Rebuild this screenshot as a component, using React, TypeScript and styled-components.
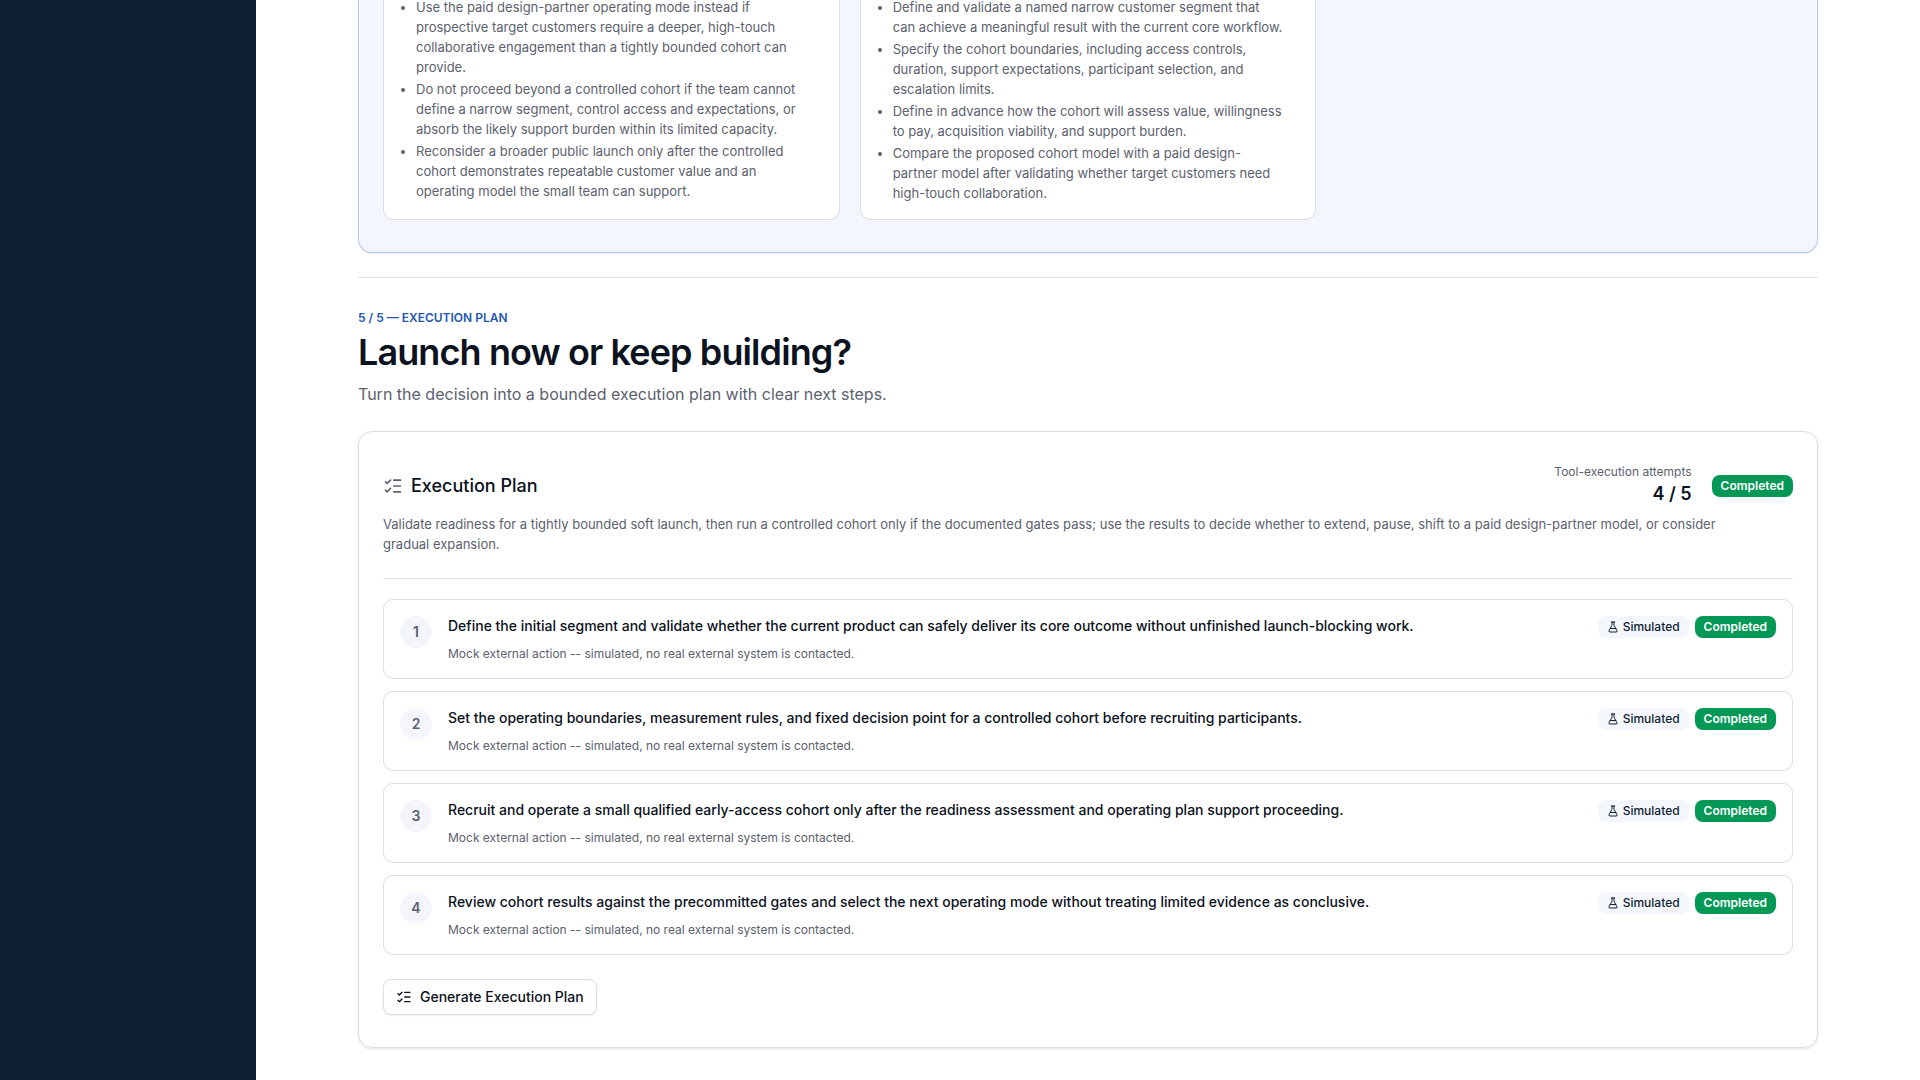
import React from "react";
import styled, { createGlobalStyle } from "styled-components";
import { FlaskConical, ListChecks } from "lucide-react";

const GlobalStyle = createGlobalStyle`
  *, *::before, *::after { box-sizing: border-box; }
  body {
    margin: 0;
    background: #ffffff;
    color: #0b1220;
    font-family: Inter, "Liberation Sans", sans-serif;
    font-size: 14px;
    line-height: 20px;
  }
  h1, h2, h3, p, ul, ol { margin: 0; padding: 0; }
`;

const Shell = styled.div`
  display: flex;
  min-height: 100vh;
  overflow: hidden;
`;

const Sidebar = styled.aside`
  flex: none;
  width: 256px;
  background: #111f33;
`;

const Main = styled.main`
  flex: 1;
  min-width: 0;
  margin-top: -3px;
  padding: 0 24px 32px;
`;

const Content = styled.div`
  max-width: 1460px;
  margin: 0 auto;
`;

const Decision = styled.section`
  display: grid;
  grid-template-columns: repeat(3, 1fr);
  gap: 20px;
  padding: 0 24px 32px;
  background: #f3f7fd;
  border: 1px solid #b9c9e6;
  border-top: 0;
  border-radius: 0 0 14px 14px;
  box-shadow: 0 1px 2px rgba(15, 30, 51, 0.1);
`;

const Note = styled.article`
  padding: 0 16px 16px;
  background: #ffffff;
  border: 1px solid #dcdfe5;
  border-top: 0;
  border-radius: 0 0 10px 10px;
`;

const Bullets = styled.ul`
  display: grid;
  gap: 2px;
  padding-left: 16px;
  color: #5b616e;
  font-size: 13px;
  white-space: pre-line;
`;

const Step = styled.section`
  margin-top: 24px;
  padding-top: 32px;
  border-top: 1px solid #dfe1e5;
`;

const Eyebrow = styled.p`
  color: #2557b0;
  font-size: 12px;
  font-weight: 600;
  line-height: 16px;
  text-transform: uppercase;
`;

const Heading = styled.h1`
  margin-top: 6px;
  font-size: 36px;
  font-weight: 600;
  line-height: 40px;
  letter-spacing: -0.025em;
`;

const Lead = styled.p`
  margin: 10px 0 24px;
  color: #5b616e;
  font-size: 16px;
  line-height: 25px;
`;

const Card = styled.div`
  padding: 32px 24px;
  border: 1px solid #dcdee2;
  border-radius: 14px;
  box-shadow: 0 1px 3px rgba(0, 0, 0, 0.12);
`;

const CardHeader = styled.header`
  display: flex;
  align-items: center;
  justify-content: space-between;
  gap: 20px;
`;

const CardTitle = styled.h2`
  display: flex;
  align-items: center;
  gap: 8px;
  font-size: 18px;
  font-weight: 500;
  line-height: 28px;

  svg { color: #5b616e; }
`;

const Status = styled.div`
  display: flex;
  align-items: center;
  gap: 20px;
`;

const Attempts = styled.div`
  text-align: right;
`;

const Small = styled.p`
  color: #5b616e;
  font-size: 12px;
  line-height: 16px;
`;

const Count = styled.p`
  font-size: 18px;
  font-weight: 600;
  line-height: 28px;
`;

const Summary = styled.p`
  margin-top: 6px;
  padding-bottom: 24px;
  color: #5b616e;
  font-size: 13px;
  border-bottom: 1px solid #dfe1e5;
`;

const Tasks = styled.ol`
  display: grid;
  gap: 12px;
  margin: 20px 0 24px;
  list-style: none;
`;

const Task = styled.li`
  display: flex;
  align-items: flex-start;
  gap: 16px;
  padding: 16px;
  border: 1px solid #dcdee2;
  border-radius: 10px;
`;

const Index = styled.span`
  display: grid;
  place-items: center;
  flex: none;
  width: 32px;
  height: 32px;
  border-radius: 50%;
  background: #f3f5fa;
  color: #5b616e;
  font-weight: 600;
`;

const TaskBody = styled.div`
  display: grid;
  flex: 1;
  gap: 10px;
`;

const TaskTitle = styled.h3`
  font-size: 14px;
  font-weight: 500;
  line-height: 20px;
`;

const Badges = styled.div`
  display: flex;
  gap: 6px;
`;

const Badge = styled.span<{ $tone: "done" | "muted" }>`
  display: inline-flex;
  align-items: center;
  gap: 4px;
  padding: 3px 9px;
  border-radius: 8px;
  background: ${({ $tone }) => ($tone === "done" ? "#039855" : "#f3f6fb")};
  color: ${({ $tone }) => ($tone === "done" ? "#ffffff" : "#111f33")};
  font-size: 12px;
  font-weight: ${({ $tone }) => ($tone === "done" ? 600 : 500)};
  line-height: 16px;
`;

const BeakerIcon = styled(FlaskConical)`
  flex: none;
`;

const Button = styled.button`
  display: inline-flex;
  align-items: center;
  gap: 8px;
  height: 36px;
  padding: 0 12px;
  border: 1px solid #dcdee2;
  border-radius: 8px;
  background: #ffffff;
  box-shadow: 0 1px 2px rgba(0, 0, 0, 0.06);
  color: inherit;
  font: 500 14px/20px Inter, "Liberation Sans", sans-serif;
  vertical-align: top;
  cursor: pointer;
`;

const conditions = [
  "Use the paid design-partner operating mode instead if\nprospective target customers require a deeper, high-touch\ncollaborative engagement than a tightly bounded cohort can\nprovide.",
  "Do not proceed beyond a controlled cohort if the team cannot\ndefine a narrow segment, control access and expectations, or\nabsorb the likely support burden within its limited capacity.",
  "Reconsider a broader public launch only after the controlled\ncohort demonstrates repeatable customer value and an\noperating model the small team can support.",
];

const nextSteps = [
  "Define and validate a named narrow customer segment that\ncan achieve a meaningful result with the current core workflow.",
  "Specify the cohort boundaries, including access controls,\nduration, support expectations, participant selection, and\nescalation limits.",
  "Define in advance how the cohort will assess value, willingness\nto pay, acquisition viability, and support burden.",
  "Compare the proposed cohort model with a paid design-\npartner model after validating whether target customers need\nhigh-touch collaboration.",
];

const tasks = [
  "Define the initial segment and validate whether the current product can safely deliver its core outcome without unfinished launch-blocking work.",
  "Set the operating boundaries, measurement rules, and fixed decision point for a controlled cohort before recruiting participants.",
  "Recruit and operate a small qualified early-access cohort only after the readiness assessment and operating plan support proceeding.",
  "Review cohort results against the precommitted gates and select the next operating mode without treating limited evidence as conclusive.",
];

function NoteList({ items }: { items: string[] }) {
  return (
    <Note>
      <Bullets>
        {items.map((item) => (
          <li key={item}>{item}</li>
        ))}
      </Bullets>
    </Note>
  );
}

export default function App() {
  return (
    <>
      <GlobalStyle />
      <Shell>
        <Sidebar />
        <Main>
          <Content>
            <Decision>
              <NoteList items={conditions} />
              <NoteList items={nextSteps} />
            </Decision>
            <Step>
              <Eyebrow>5 / 5 — Execution Plan</Eyebrow>
              <Heading>Launch now or keep building?</Heading>
              <Lead>Turn the decision into a bounded execution plan with clear next steps.</Lead>
              <Card>
                <CardHeader>
                  <CardTitle>
                    <ListChecks size={20} aria-hidden />
                    Execution Plan
                  </CardTitle>
                  <Status>
                    <Attempts>
                      <Small>Tool-execution attempts</Small>
                      <Count>4 / 5</Count>
                    </Attempts>
                    <Badge $tone="done">Completed</Badge>
                  </Status>
                </CardHeader>
                <Summary>
                  Validate readiness for a tightly bounded soft launch, then run a controlled cohort only if the
                  documented gates pass; use the results to decide whether to extend, pause, shift to a paid
                  design-partner model, or consider
                  <br />
                  gradual expansion.
                </Summary>
                <Tasks>
                  {tasks.map((title, i) => (
                    <Task key={title}>
                      <Index>{i + 1}</Index>
                      <TaskBody>
                        <TaskTitle>{title}</TaskTitle>
                        <Small>Mock external action -- simulated, no real external system is contacted.</Small>
                      </TaskBody>
                      <Badges>
                        <Badge $tone="muted">
                          <BeakerIcon size={12} aria-hidden />
                          Simulated
                        </Badge>
                        <Badge $tone="done">Completed</Badge>
                      </Badges>
                    </Task>
                  ))}
                </Tasks>
                <Button type="button">
                  <ListChecks size={16} aria-hidden />
                  Generate Execution Plan
                </Button>
              </Card>
            </Step>
          </Content>
        </Main>
      </Shell>
    </>
  );
}
